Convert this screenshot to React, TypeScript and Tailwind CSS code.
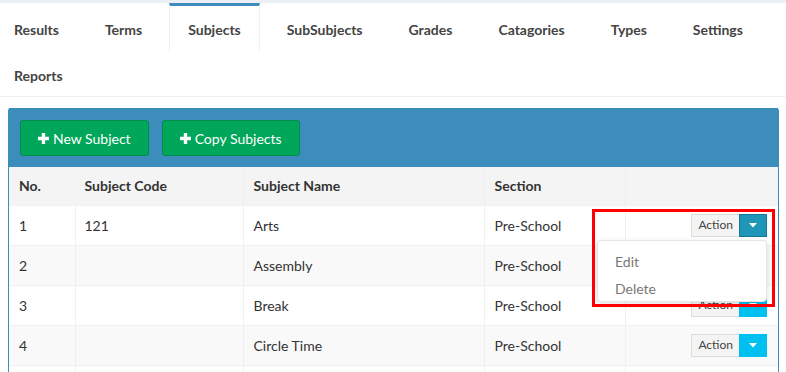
import React from "react"

const tabs = ["Results", "Terms", "Subjects", "SubSubjects", "Grades", "Catagories", "Types", "Settings"]

const subjects = [
  { no: 1, code: "121", name: "Arts", section: "Pre-School" },
  { no: 2, code: "", name: "Assembly", section: "Pre-School" },
  { no: 3, code: "", name: "Break", section: "Pre-School" },
  { no: 4, code: "", name: "Circle Time", section: "Pre-School" },
]

function Caret() {
  return (
    <svg width="8" height="5" viewBox="0 0 8 5">
      <path d="M0 0 L8 0 L4 4.5 Z" fill="#fff" />
    </svg>
  )
}

function Plus() {
  return (
    <svg width="11" height="11" viewBox="0 0 11 11" className="mr-[4px]">
      <path d="M3.8 0 H7.2 V3.8 H11 V7.2 H7.2 V11 H3.8 V7.2 H0 V3.8 H3.8 Z" fill="#fff" />
    </svg>
  )
}

function ActionButton({ open }: { open?: boolean }) {
  return (
    <div className="flex h-[23px]">
      <div className="flex items-center px-[6px] bg-[#f4f4f4] border border-[#ddd] border-r-0 text-[12px] text-[#444]">
        Action
      </div>
      <div
        className={`flex items-center justify-center w-[28px] ${
          open ? "bg-[#1f95b8] border border-[#137899]" : "bg-[#00c0ef]"
        }`}
      >
        <Caret />
      </div>
    </div>
  )
}

export default function App() {
  return (
    <div
      className="min-h-screen w-[786px] h-[372px] overflow-hidden bg-white text-[14px] text-[#333]"
      style={{ fontFamily: "Lato, 'Open Sans', sans-serif" }}
    >
      <div className="h-[3px] bg-[#ecf0f5]" />

      {/* Tabs */}
      <div className="h-[94px] border-b border-[#f0f0f0] flex flex-wrap items-start content-start -ml-[5px]">
        {tabs.map((t) => (
          <div
            key={t}
            className={`h-[49px] px-[18px] mr-[8px] pt-[13px] font-bold text-[#444] border-t-[3px] ${
              t === "Subjects"
                ? "border-t-[#3c8dbc] border-x border-x-[#f0f0f0]"
                : "border-t-transparent border-x border-x-transparent"
            }`}
          >
            {t}
          </div>
        ))}
        <div className="h-[44px] px-[18px] pt-[10px] font-bold text-[#444] border-t-[3px] border-t-transparent border-x border-x-transparent">
          Reports
        </div>
      </div>

      {/* Box */}
      <div className="mt-[11px] ml-[8px] w-[771px] border-x border-[#3c8dbc] rounded-t-[3px]">
        <div className="h-[59px] bg-[#3c8dbc] flex items-center gap-[13px] px-[11px] pt-[1px]">
          <button className="h-[36px] px-[17px] flex items-center bg-[#00a65a] border border-[#008d4c] rounded-[3px] text-white text-[14px]">
            <Plus />
            New Subject
          </button>
          <button className="h-[36px] px-[17px] flex items-center bg-[#00a65a] border border-[#008d4c] rounded-[3px] text-white text-[14px]">
            <Plus />
            Copy Subjects
          </button>
        </div>

        <table className="w-full border-collapse">
          <thead>
            <tr className="h-[38px] bg-[#f4f4f4]">
              <th className="w-[66px] text-left font-bold pl-[10px] border-r border-[#f4f4f4]">No.</th>
              <th className="w-[168px] text-left font-bold pl-[9px] border-r border-[#eee]">Subject Code</th>
              <th className="w-[241px] text-left font-bold pl-[10px] border-r border-[#eee]">Subject Name</th>
              <th className="w-[141px] text-left font-bold pl-[10px] border-r border-[#eee]">Section</th>
              <th className="border-[#eee]"></th>
            </tr>
          </thead>
          <tbody>
            {subjects.map((s, i) => (
              <tr key={s.no} className={`h-[40px] ${i % 2 === 1 ? "bg-[#f9f9f9]" : "bg-white"}`}>
                <td className="pl-[10px] border border-l-0 border-[#f0f0f0]">{s.no}</td>
                <td className="pl-[9px] border border-[#f0f0f0]">{s.code}</td>
                <td className="pl-[10px] border border-[#f0f0f0]">{s.name}</td>
                <td className="pl-[10px] border border-[#f0f0f0]">{s.section}</td>
                <td className="border border-r-0 border-[#f0f0f0] pr-[11px]">
                  <div className="relative flex justify-end">
                    <ActionButton open={i === 0} />
                    {i === 0 && (
                      <>
                        <div className="absolute top-[26px] right-0 w-[170px] h-[62px] bg-white border border-[#e5e5e5] rounded-[4px] shadow-[0_2px_6px_rgba(0,0,0,0.12)] z-10 py-[7px] text-[#777]">
                          <div className="h-[27px] flex items-center pl-[17px]">Edit</div>
                          <div className="h-[27px] flex items-center pl-[17px]">Delete</div>
                        </div>
                        <div className="absolute top-[-5px] right-[-8px] w-[183px] h-[98px] border-[3px] border-[#ff0000] z-20 pointer-events-none" />
                      </>
                    )}
                  </div>
                </td>
              </tr>
            ))}
            <tr className="h-[40px] bg-white">
              <td className="border border-l-0 border-[#f0f0f0]"></td>
              <td className="border border-[#f0f0f0]"></td>
              <td className="border border-[#f0f0f0]"></td>
              <td className="border border-[#f0f0f0]"></td>
              <td className="border border-r-0 border-[#f0f0f0]"></td>
            </tr>
          </tbody>
        </table>
      </div>
    </div>
  )
}
